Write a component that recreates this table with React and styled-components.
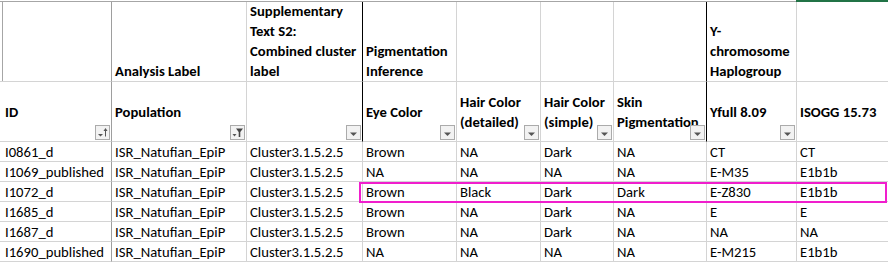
import React from "react";
import styled, { createGlobalStyle, css } from "styled-components";

const GlobalStyle = createGlobalStyle`
  html, body { margin: 0; padding: 0; background: #ffffff; }
  body { font-family: "Carlito", "Lato", "Liberation Sans", sans-serif; color: #000; }
`;

const GRID = "#d4d4d4";
const DARK = "#9e9e9e";

const Page = styled.div`
  width: 888px;
  height: 264px;
  overflow: hidden;
  padding-top: 1px;
  box-sizing: border-box;
`;

const Sheet = styled.div`
  position: relative;
  display: grid;
  grid-template-columns: 112px 135px 116px 94px 84px 73px 93px 90px 120px;
  grid-template-rows: 80px 60px repeat(6, 20px);
  border-top: 1px solid #a6a6a6;
  font-size: 14.67px;
  line-height: 20px;
  width: max-content;
`;

const edgeColor = (edge) =>
  edge === "black" ? "#000000" : edge === "dark" ? DARK : GRID;

const cellBase = css`
  position: relative;
  box-sizing: border-box;
  border-right: 1px solid ${(p) => edgeColor(p.$edge)};
  border-bottom: 1px solid ${GRID};
  padding: 0 0 0 ${(p) => (p.$lead ? "5px" : "3px")};
  overflow: hidden;
  white-space: nowrap;
`;

const HeadCell = styled.div`
  ${cellBase};
  display: flex;
  flex-direction: column;
  font-weight: 700;
  white-space: normal;
  ${(p) =>
    p.$tier === "top"
      ? css`
          justify-content: flex-end;
        `
      : css`
          justify-content: center;
        `}
  ${(p) =>
    p.$outline &&
    css`
      box-shadow: inset 2px 0 0 #ffffff, inset 3px 0 0 #a6a6a6;
    `}
`;

const DataCell = styled.div`
  ${cellBase};
  display: flex;
  align-items: center;
`;

const FilterButton = styled.span`
  position: absolute;
  right: 1px;
  bottom: 1px;
  width: 15px;
  height: 15px;
  box-sizing: border-box;
  border: 1px solid #ababab;
  background: #f2f2f2;
  display: flex;
  z-index: 1;
  svg {
    display: block;
  }
`;

const Highlight = styled.div`
  position: absolute;
  grid-column: 4 / 10;
  grid-row: 5 / 6;
  top: 0;
  bottom: -1px;
  left: -4px;
  right: 30px;
  border: 2px solid #f01ecd;
  pointer-events: none;
  z-index: 2;
`;

const SelectionMark = styled.div`
  position: absolute;
  grid-column: 9 / 10;
  grid-row: 1 / 2;
  top: -2px;
  left: -1px;
  right: 0;
  height: 2px;
  background: #217346;
  z-index: 2;
`;

const ArrowIcon = ({ kind }) => {
  if (kind === "sort") {
    return (
      <svg width="13" height="13" viewBox="0 0 13 13">
        <polygon points="2,8 7,8 4.5,10.5" fill="#555" />
        <path d="M9.5 3 V10.5" stroke="#555" strokeWidth="1" />
        <polygon points="9.5,2 7.5,5 11.5,5" fill="#555" />
      </svg>
    );
  }
  if (kind === "filter") {
    return (
      <svg width="13" height="13" viewBox="0 0 13 13">
        <polygon points="1.5,8 5.5,8 3.5,10.5" fill="#555" />
        <polygon points="5,2.5 12,2.5 9.3,6 9.3,11 7.7,11 7.7,6" fill="#444" />
      </svg>
    );
  }
  return (
    <svg width="13" height="13" viewBox="0 0 13 13">
      <polygon points="3,6.5 10,6.5 6.5,10" fill="#555" />
    </svg>
  );
};

const topHeaders = [
  { text: null, edge: "dark", outline: true },
  { text: "Analysis Label" },
  { text: ["Supplementary", "Text S2:", "Combined cluster", "label"], edge: "black" },
  { text: ["Pigmentation", "Inference"] },
  { text: null },
  { text: null },
  { text: null, edge: "black" },
  { text: ["Y-", "chromosome", "Haplogroup"] },
  { text: null },
];

const subHeaders = [
  { text: "ID", edge: "dark", lead: true, button: "sort" },
  { text: "Population", button: "filter" },
  { text: null, edge: "black", button: "plain" },
  { text: "Eye Color", button: "plain" },
  { text: ["Hair Color", "(detailed)"], button: "plain" },
  { text: ["Hair Color", "(simple)"], button: "plain" },
  { text: ["Skin", "Pigmentation"], edge: "black", button: "plain" },
  { text: "Yfull 8.09", button: "plain" },
  { text: "ISOGG 15.73", button: "plain" },
];

const rows = [
  ["I0861_d", "ISR_Natufian_EpiP", "Cluster3.1.5.2.5", "Brown", "NA", "Dark", "NA", "CT", "CT"],
  ["I1069_published", "ISR_Natufian_EpiP", "Cluster3.1.5.2.5", "NA", "NA", "NA", "NA", "E-M35", "E1b1b"],
  ["I1072_d", "ISR_Natufian_EpiP", "Cluster3.1.5.2.5", "Brown", "Black", "Dark", "Dark", "E-Z830", "E1b1b"],
  ["I1685_d", "ISR_Natufian_EpiP", "Cluster3.1.5.2.5", "Brown", "NA", "Dark", "NA", "E", "E"],
  ["I1687_d", "ISR_Natufian_EpiP", "Cluster3.1.5.2.5", "Brown", "NA", "Dark", "NA", "NA", "NA"],
  ["I1690_published", "ISR_Natufian_EpiP", "Cluster3.1.5.2.5", "NA", "NA", "NA", "NA", "E-M215", "E1b1b"],
];

const Lines = ({ text }) =>
  Array.isArray(text) ? text.map((t) => <span key={t}>{t}</span>) : text ? <span>{text}</span> : null;

export default function App() {
  return (
    <Page>
      <GlobalStyle />
      <Sheet>
        {topHeaders.map((h, i) => (
          <HeadCell key={`t${i}`} $tier="top" $edge={h.edge} $outline={h.outline}>
            <Lines text={h.text} />
          </HeadCell>
        ))}
        {subHeaders.map((h, i) => (
          <HeadCell key={`s${i}`} $tier="sub" $edge={h.edge} $lead={h.lead}>
            <Lines text={h.text} />
            <FilterButton>
              <ArrowIcon kind={h.button} />
            </FilterButton>
          </HeadCell>
        ))}
        {rows.map((r, ri) =>
          r.map((v, ci) => (
            <DataCell key={`${ri}-${ci}`} $edge={ci === 0 ? "dark" : undefined} $lead={ci === 0}>
              {v}
            </DataCell>
          ))
        )}
        <Highlight />
        <SelectionMark />
      </Sheet>
    </Page>
  );
}
